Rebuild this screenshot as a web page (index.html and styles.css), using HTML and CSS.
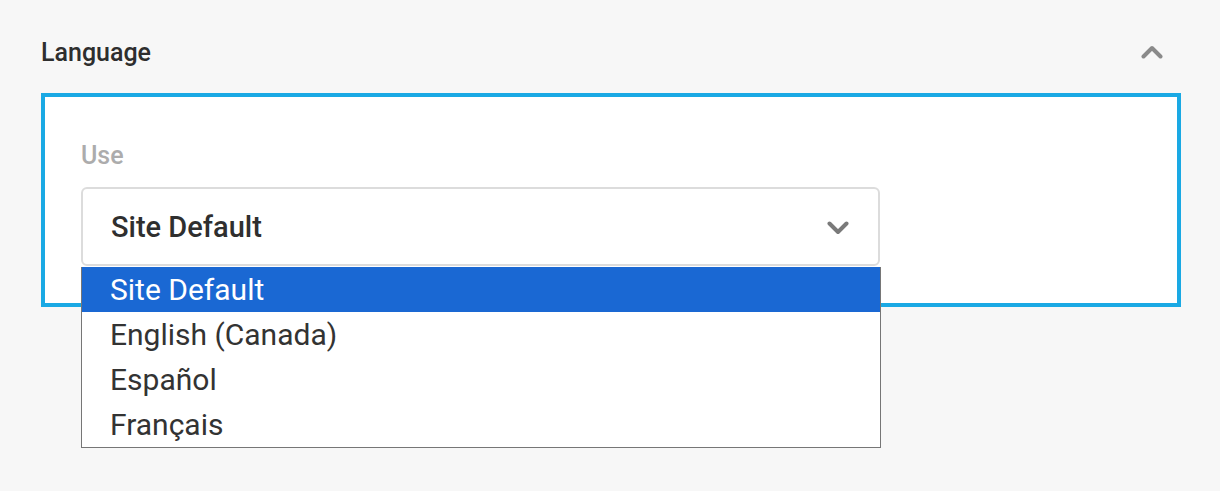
FILE: index.html
```html
<!DOCTYPE html>
<html lang="en">
<head>
<meta charset="utf-8">
<title>Language</title>
<link rel="stylesheet" href="styles.css">
</head>
<body>
<section class="panel">
  <header class="panel-head">
    <h2 class="panel-title">Language</h2>
    <svg class="chev-up" width="22" height="14" viewBox="0 0 22 14" aria-hidden="true">
      <path d="M2.5 11.5 L11 3 L19.5 11.5" fill="none" stroke="#8a8a8a" stroke-width="4" stroke-linecap="round" stroke-linejoin="round"/>
    </svg>
  </header>
  <div class="panel-body">
    <div class="field-label">Use</div>
    <div class="select-wrap">
      <div class="select">
        <span class="select-value">Site Default</span>
        <svg class="chev-down" width="22" height="14" viewBox="0 0 22 14" aria-hidden="true">
          <path d="M2.5 2.5 L11 11 L19.5 2.5" fill="none" stroke="#7a7a7a" stroke-width="4" stroke-linecap="round" stroke-linejoin="round"/>
        </svg>
      </div>
      <ul class="options">
        <li class="option selected">Site Default</li>
        <li class="option">English (Canada)</li>
        <li class="option">Español</li>
        <li class="option">Français</li>
      </ul>
    </div>
  </div>
</section>
</body>
</html>
```

FILE: styles.css
```css
html, body {
  margin: 0;
  padding: 0;
}
body {
  background: #f7f7f7;
  font-family: Roboto, "Liberation Sans", sans-serif;
  color: #333;
  width: 1220px;
  height: 491px;
  overflow: hidden;
}
.panel {
  padding: 38px 39px 0 41px;
}
.panel-head {
  display: flex;
  align-items: center;
  justify-content: space-between;
  height: 30px;
  padding-right: 18px;
  margin-bottom: 25px;
}
.panel-title {
  margin: 0;
  font-size: 25px;
  line-height: 30px;
  font-weight: 500;
  color: #2e2e2e;
}
.chev-up {
  display: block;
  margin-top: -3px;
}
.panel-body {
  background: #fff;
  border: 4px solid #1aa9e4;
  padding: 44px 36px 37px 36px;
}
.field-label {
  font-size: 25px;
  line-height: 30px;
  font-weight: 500;
  color: #acacac;
  margin-bottom: 16px;
}
.select-wrap {
  position: relative;
  width: 799px;
}
.select {
  box-sizing: border-box;
  height: 79px;
  border: 2px solid #dcdcdc;
  border-radius: 6px;
  background: #fff;
  display: flex;
  align-items: center;
  justify-content: space-between;
  padding: 0 29px 0 28px;
}
.select-value {
  font-size: 29px;
  font-weight: 500;
  color: #2f2f2f;
}
.chev-down {
  display: block;
  margin-top: 2px;
}
.options {
  position: absolute;
  left: 0;
  top: 80px;
  box-sizing: border-box;
  width: 800px;
  margin: 0;
  padding: 0;
  list-style: none;
  background: #fff;
  border: 1px solid #767676;
  border-top: 0;
}
.option {
  height: 45px;
  line-height: 46px;
  padding-left: 28px;
  font-size: 30px;
  color: #333;
}
.option.selected {
  background: #1a68d3;
  color: #fff;
}
```
